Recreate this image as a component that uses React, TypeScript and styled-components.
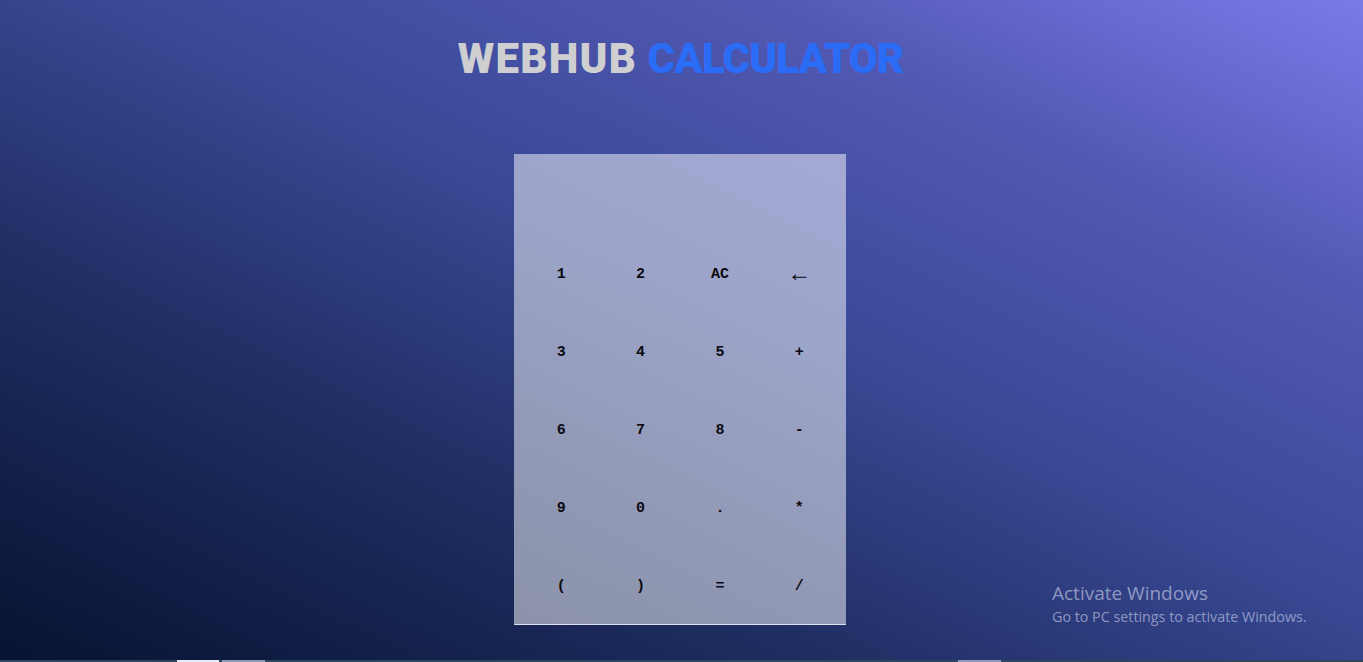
import React from "react";
import styled, { createGlobalStyle } from "styled-components";

const GlobalStyle = createGlobalStyle`
  html, body { margin: 0; padding: 0; height: 100%; }
  body {
    background: linear-gradient(to top right, #061331 0%, #1f2d62 30%, #3a4a96 55%, #5259b4 78%, #7b7ae9 100%);
    background-attachment: fixed;
    font-family: "Liberation Sans", Arial, sans-serif;
    overflow: hidden;
  }
  #root { height: 100%; }
`;

const Page = styled.div`
  height: 662px;
  display: flex;
  flex-direction: column;
  align-items: center;
  position: relative;
`;

const Title = styled.h1`
  margin: 36px 0 0 0;
  height: 46px;
  font-family: Roboto, "Liberation Sans", sans-serif;
  font-weight: 900;
  font-size: 42px;
  line-height: 46px;
  color: #cfcfd2;
  white-space: nowrap;
  transform: translateX(-1px);
`;

const TitlePart = styled.span<{ $accent?: boolean }>`
  color: ${(p) => (p.$accent ? "#2b6cf7" : "#cfcfd2")};
  letter-spacing: ${(p) => (p.$accent ? "-0.9px" : "1.3px")};
`;

const Calculator = styled.div`
  margin-top: 72px;
  width: 332px;
  height: 471px;
  box-sizing: border-box;
  background: rgba(255, 255, 255, 0.5);
  border-bottom: 1px solid rgba(235, 240, 255, 0.85);
  display: flex;
  flex-direction: column;
  transform: translateX(-2px);
`;

const Display = styled.div`
  height: 81px;
  flex: none;
`;

const Keys = styled.div`
  display: grid;
  grid-template-columns: repeat(4, 79.4px);
  grid-auto-rows: 78px;
  padding: 0 7px 0 8px;
`;

const Key = styled.button<{ $thin?: boolean }>`
  border: none;
  background: transparent;
  padding: 0;
  display: flex;
  align-items: center;
  justify-content: center;
  font-family: "Liberation Mono", "Courier New", monospace;
  font-weight: ${(p) => (p.$thin ? 400 : 700)};
  font-size: ${(p) => (p.$thin ? "24px" : "15px")};
  color: #0a0a10;
  cursor: pointer;
`;

const Watermark = styled.div`
  position: absolute;
  left: 1052px;
  top: 581px;
  font-family: "Open Sans", "Noto Sans", sans-serif;
  color: rgba(205, 210, 235, 0.62);
`;

const WatermarkTitle = styled.div`
  font-size: 19px;
  font-weight: 400;
  line-height: 25px;
`;

const WatermarkText = styled.div`
  font-size: 14.3px;
  line-height: 22px;
`;

const Taskbar = styled.div`
  margin-top: auto;
  width: 100%;
  height: 2px;
  background: #2c4660;
  display: flex;
`;

const TaskItem = styled.div<{ $left: number; $width: number; $light?: boolean }>`
  margin-left: ${(p) => p.$left}px;
  width: ${(p) => p.$width}px;
  background: ${(p) => (p.$light ? "#e8ecf4" : "#8e9ab8")};
`;

const keys = [
  "1", "2", "AC", "←",
  "3", "4", "5", "+",
  "6", "7", "8", "-",
  "9", "0", ".", "*",
  "(", ")", "=", "/",
];

export default function App() {
  return (
    <>
      <GlobalStyle />
      <Page>
        <Title>
          <TitlePart>WEBHUB</TitlePart> <TitlePart $accent>CALCULATOR</TitlePart>
        </Title>
        <Calculator>
          <Display />
          <Keys>
            {keys.map((k) => (
              <Key key={k} $thin={k === "←"}>
                {k}
              </Key>
            ))}
          </Keys>
        </Calculator>
        <Watermark>
          <WatermarkTitle>Activate Windows</WatermarkTitle>
          <WatermarkText>Go to PC settings to activate Windows.</WatermarkText>
        </Watermark>
        <Taskbar>
          <TaskItem $left={177} $width={42} $light />
          <TaskItem $left={3} $width={43} />
          <TaskItem $left={693} $width={43} />
        </Taskbar>
      </Page>
    </>
  );
}
